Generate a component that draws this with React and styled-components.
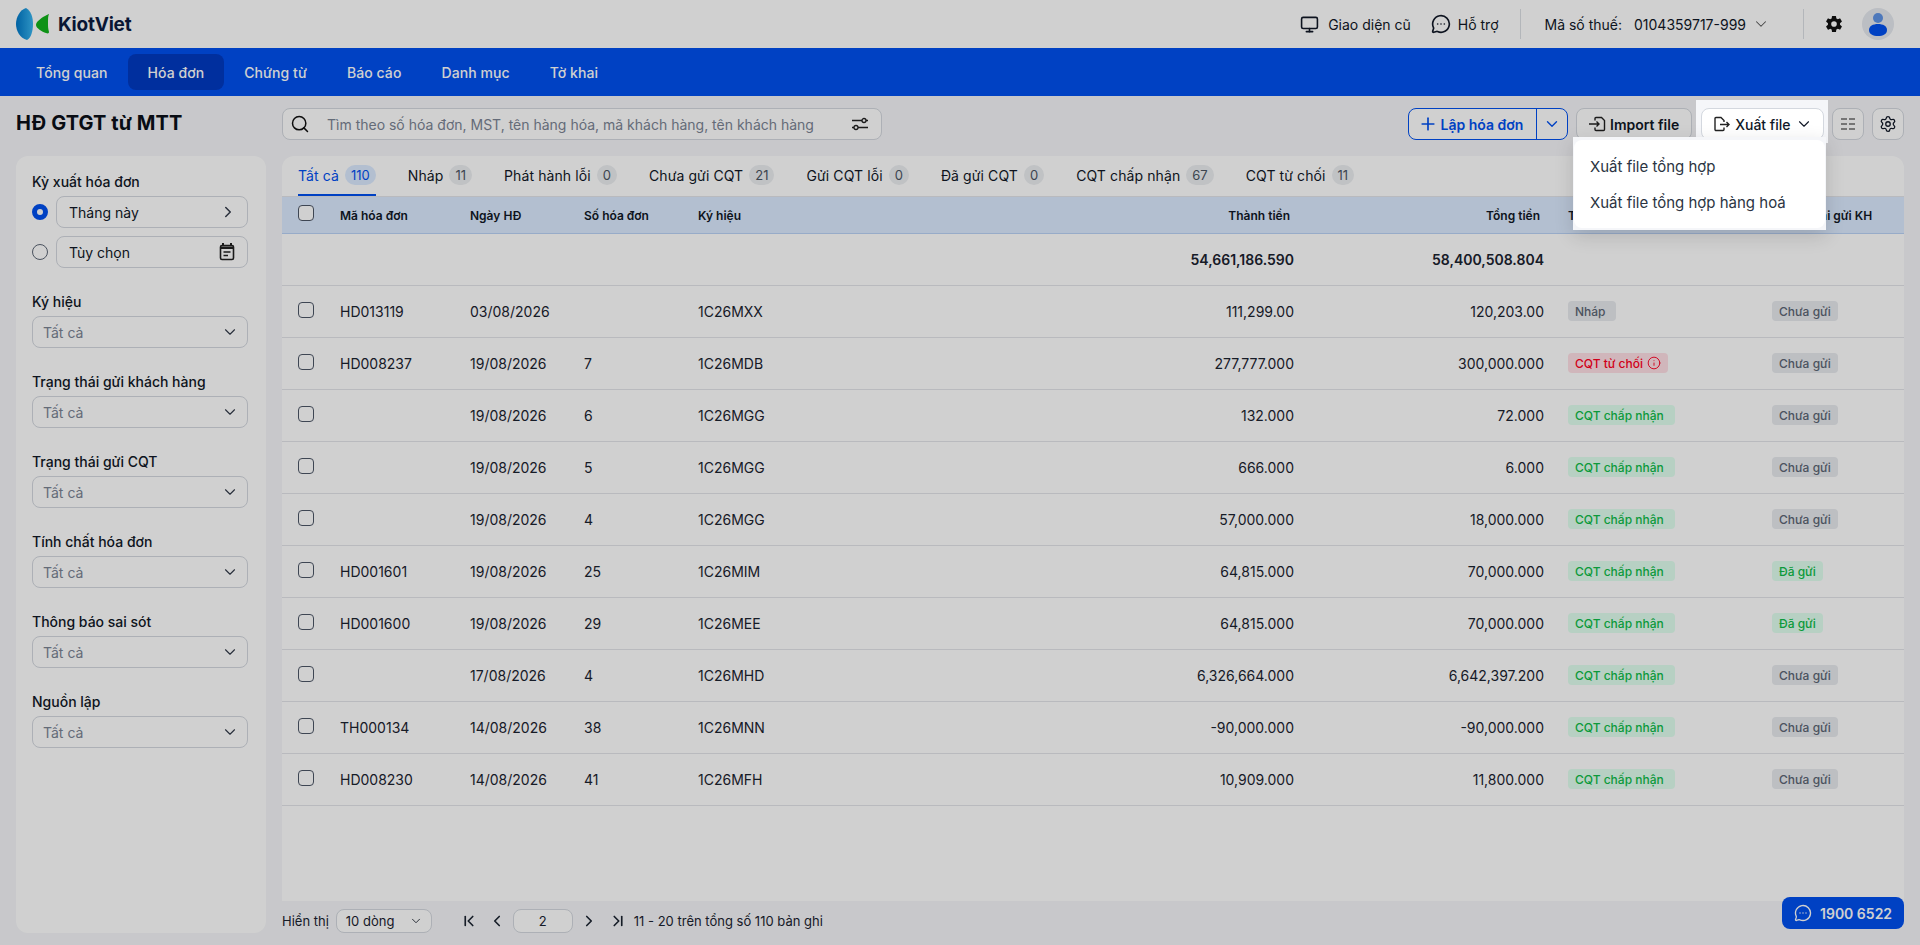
import React from "react";
import styled, { createGlobalStyle } from "styled-components";
import {
  ChevronDown,
  ChevronFirst,
  ChevronLast,
  ChevronLeft,
  ChevronRight,
  Info,
  MessageCircleMore,
  Monitor,
  Plus,
  Search,
  Settings,
} from "lucide-react";
import { IoSettingsSharp } from "react-icons/io5";

const navItems = ["Tổng quan", "Hóa đơn", "Chứng từ", "Báo cáo", "Danh mục", "Tờ khai"];

const tabs = [
  { text: "Tất cả", count: 110 },
  { text: "Nháp", count: 11 },
  { text: "Phát hành lỗi", count: 0 },
  { text: "Chưa gửi CQT", count: 21 },
  { text: "Gửi CQT lỗi", count: 0 },
  { text: "Đã gửi CQT", count: 0 },
  { text: "CQT chấp nhận", count: 67 },
  { text: "CQT từ chối", count: 11 },
];

const filters = ["Ký hiệu", "Trạng thái gửi khách hàng", "Trạng thái gửi CQT", "Tính chất hóa đơn", "Thông báo sai sót", "Nguồn lập"];

const rows = [
  ["HD013119", "03/08/2026", "", "1C26MXX", "111,299.00", "120,203.00", "draft", false],
  ["HD008237", "19/08/2026", "7", "1C26MDB", "277,777.000", "300,000.000", "rejected", false],
  ["", "19/08/2026", "6", "1C26MGG", "132.000", "72.000", "accepted", false],
  ["", "19/08/2026", "5", "1C26MGG", "666.000", "6.000", "accepted", false],
  ["", "19/08/2026", "4", "1C26MGG", "57,000.000", "18,000.000", "accepted", false],
  ["HD001601", "19/08/2026", "25", "1C26MIM", "64,815.000", "70,000.000", "accepted", true],
  ["HD001600", "19/08/2026", "29", "1C26MEE", "64,815.000", "70,000.000", "accepted", true],
  ["", "17/08/2026", "4", "1C26MHD", "6,326,664.000", "6,642,397.200", "accepted", false],
  ["TH000134", "14/08/2026", "38", "1C26MNN", "-90,000.000", "-90,000.000", "accepted", false],
  ["HD008230", "14/08/2026", "41", "1C26MFH", "10,909.000", "11,800.000", "accepted", false],
];

const GlobalStyle = createGlobalStyle`
  html, body {
    margin: 0;
    height: 100%;
    overflow: hidden;
  }
  body {
    background: #f5f6f9;
    color: #111827;
    font-family: "Inter", "Liberation Sans", sans-serif;
    font-size: 14px;
  }
  * {
    box-sizing: border-box;
  }
`;

const Page = styled.div`
  display: flex;
  flex-direction: column;
  height: 100vh;
`;

// dim layer that sits above the page while the export menu is open
const Overlay = styled.div`
  position: fixed;
  inset: 0;
  z-index: 10;
  background: rgba(0, 0, 0, 0.184);
`;

const TopBar = styled.header`
  display: flex;
  align-items: center;
  justify-content: space-between;
  height: 48px;
  padding: 0 26px 0 16px;
  background: #fff;
`;

const Logo = styled.div`
  display: flex;
  align-items: center;
  gap: 8px;
  font-size: 19px;
  font-weight: 700;
  letter-spacing: -0.2px;
  color: #0c1c42;
`;

const TopActions = styled.div`
  display: flex;
  align-items: center;
  height: 100%;
`;

const TopLink = styled.div`
  display: flex;
  align-items: center;
  gap: ${(props) => props.$inner || 9}px;
  margin-right: ${(props) => props.$gap || 0}px;
`;

const Divider = styled.span`
  width: 1px;
  height: 30px;
  margin: 0 ${(props) => props.$right}px 0 ${(props) => props.$left}px;
  background: #dcdfe4;
`;

const TaxLabel = styled.span`
  margin-right: 12px;
`;

const Gear = styled(IoSettingsSharp)`
  margin-right: 19px;
  color: #111;
`;

const Avatar = styled.div`
  display: flex;
  align-items: center;
  justify-content: center;
  width: 32px;
  height: 32px;
  border-radius: 50%;
  background: #e6e9ef;
`;

const Nav = styled.nav`
  display: flex;
  align-items: center;
  height: 48px;
  padding: 0 16px;
  background: #0050f0;
`;

const NavItem = styled.div`
  display: flex;
  align-items: center;
  height: 36px;
  padding: 0 20px;
  border-radius: 8px;
  color: #fff;
  font-weight: 500;
  letter-spacing: 0.08px;
  background: ${(props) => (props.$active ? "#003ac2" : "transparent")};
`;

const Body = styled.div`
  flex: 1;
  display: flex;
  gap: 16px;
  min-height: 0;
  padding: 12px 16px;
`;

const LeftColumn = styled.aside`
  display: flex;
  flex-direction: column;
  gap: 16px;
  width: 250px;
  flex-shrink: 0;
`;

const Title = styled.h1`
  display: flex;
  align-items: center;
  height: 32px;
  margin: 0;
  padding-bottom: 2px;
  font-size: 20px;
  font-weight: 700;
  letter-spacing: 0.1px;
  color: #0b0f18;
`;

const SidePanel = styled.div`
  flex: 1;
  display: flex;
  flex-direction: column;
  gap: 24px;
  padding: 16px 18px 16px 16px;
  border-radius: 12px;
  background: #fff;
`;

const FilterGroup = styled.div`
  display: flex;
  flex-direction: column;
  gap: 4px;
`;

const FilterLabel = styled.label`
  line-height: 20px;
  font-weight: 500;
`;

const RadioRow = styled.div`
  display: flex;
  align-items: center;
  gap: 8px;
  & + & {
    margin-top: 4px;
  }
`;

const Radio = styled.span`
  width: 16px;
  height: 16px;
  flex-shrink: 0;
  border-radius: 50%;
  background: #fff;
  border: ${(props) => (props.$checked ? "5px solid #0050f0" : "1px solid #5c6675")};
`;

const Field = styled.div`
  display: flex;
  align-items: center;
  justify-content: space-between;
  flex-grow: ${(props) => (props.$select ? 0 : 1)};
  height: 32px;
  padding: 0 ${(props) => (props.$select ? "8px 0 10px" : "10px 0 12px")};
  border: 1px solid #d4d8df;
  border-radius: 8px;
  background: #fff;
  color: ${(props) => (props.$select ? "#7b8494" : "#111827")};
  svg {
    color: #333b4a;
  }
`;

const MainColumn = styled.main`
  flex: 1;
  display: flex;
  flex-direction: column;
  min-width: 0;
`;

const Toolbar = styled.div`
  display: flex;
  align-items: center;
  justify-content: space-between;
  height: 32px;
  margin-bottom: 16px;
`;

const SearchBox = styled.div`
  display: flex;
  align-items: center;
  width: 600px;
  height: 32px;
  padding: 0 12px 0 7px;
  border: 1px solid #d4d8df;
  border-radius: 8px;
  background: #fff;
  color: #111;
`;

const Placeholder = styled.span`
  flex: 1;
  margin-left: 17px;
  color: #7b8494;
`;

const Actions = styled.div`
  display: flex;
  align-items: center;
  gap: 8px;
`;

const SplitButton = styled.div`
  display: flex;
  width: 160px;
  height: 32px;
  border: 1px solid #0050f0;
  border-radius: 8px;
  color: #0050f0;
  font-weight: 600;
  background: #fff;
`;

const SplitMain = styled.div`
  display: flex;
  align-items: center;
  gap: 3px;
  width: 128px;
  padding-left: 9px;
  border-right: 1px solid #0050f0;
`;

const SplitArrow = styled.div`
  flex: 1;
  display: flex;
  align-items: center;
  justify-content: center;
`;

const Button = styled.div`
  display: flex;
  align-items: center;
  justify-content: center;
  gap: 4px;
  height: 32px;
  padding: 0 ${(props) => props.$pad ?? 12}px;
  width: ${(props) => (props.$icon ? "32px" : "auto")};
  border: 1px solid #d4d8df;
  border-radius: 8px;
  background: #fff;
  font-weight: ${(props) => (props.$medium ? 500 : 600)};
  color: #111827;
`;

const ExportWrap = styled.div`
  position: relative;
  z-index: 20;
  margin: -8px -4px -3px -4px;
  padding: 8px 4px 3px 5px;
  background: #f5f6f9;
`;

const ExportMenu = styled.div`
  position: absolute;
  top: 37px;
  right: 2px;
  width: 253px;
  padding: 3px 1px 2px;
  background: #f5f6f9;
  box-shadow: 0 6px 18px rgba(0, 0, 0, 0.14);
`;

const ExportList = styled.ul`
  display: flex;
  flex-direction: column;
  margin: 0;
  padding: 8px 0;
  list-style: none;
  border-radius: 8px;
  background: #fff;
`;

const ExportItem = styled.li`
  display: flex;
  align-items: center;
  height: 36px;
  padding: 0 16px;
  font-size: 15px;
  color: #2b3442;
`;

const TablePanel = styled.section`
  flex: 1;
  display: flex;
  flex-direction: column;
  border-radius: 12px 12px 0 0;
  background: #fff;
  overflow: hidden;
`;

const TabRow = styled.div`
  display: flex;
  gap: 32px;
  height: 41px;
  padding: 0 16px;
  border-bottom: 1px solid #e3e5e9;
  flex-shrink: 0;
`;

const Tab = styled.div`
  display: flex;
  align-items: center;
  gap: 6px;
  height: 40px;
  letter-spacing: 0.1px;
  border-bottom: 2px solid ${(props) => (props.$active ? "#0050f0" : "transparent")};
  color: ${(props) => (props.$active ? "#0050f0" : "#111827")};
`;

const TabCount = styled.span`
  display: flex;
  align-items: center;
  justify-content: center;
  min-width: 20px;
  height: 20px;
  padding: 0 6px;
  border-radius: 10px;
  font-size: 13px;
  letter-spacing: 0;
  background: ${(props) => (props.$active ? "#dcebff" : "#eceef1")};
  color: ${(props) => (props.$active ? "#0050f0" : "#4b5563")};
`;

const Table = styled.table`
  width: 100%;
  table-layout: fixed;
  border-collapse: collapse;
`;

const HeadRow = styled.tr`
  height: 36px;
  background: #dcebff;
  border-bottom: 1px solid #b9d2f5;
`;

const HeadCell = styled.th`
  padding: 2px ${(props) => (props.$right ? "4px" : "0")} 0 0;
  font-size: 12px;
  font-weight: 600;
  text-align: ${(props) => (props.$right ? "right" : "left")};
  white-space: nowrap;
  color: #111827;
`;

const Row = styled.tr`
  height: 52px;
  border-bottom: 1px solid #e3e5e9;
`;

const Cell = styled.td`
  padding: 0;
  white-space: nowrap;
  text-align: ${(props) => (props.$right ? "right" : "left")};
  font-weight: ${(props) => (props.$bold ? 600 : 400)};
  color: #1b2330;
`;

const CheckCell = styled.td`
  padding: 0 0 2px 16px;
`;

const HeadCheckCell = styled.th`
  padding: 0 0 4px 16px;
  text-align: left;
`;

const Checkbox = styled.span`
  display: block;
  width: 16px;
  height: 16px;
  border: 1px solid #4d5666;
  border-radius: 4px;
  background: #fff;
`;

const statusColors = {
  draft: ["#e8eaee", "#5c6675"],
  rejected: ["#ffe0e6", "#ff0022"],
  accepted: ["#e1fff0", "#0fbd49"],
};

const Badge = styled.span`
  display: inline-flex;
  align-items: center;
  gap: 4px;
  height: 20px;
  padding: ${(props) => props.$padding || "0 7px"};
  border-radius: 4px;
  font-size: 12px;
  font-weight: 500;
  background: ${(props) => statusColors[props.$kind][0]};
  color: ${(props) => statusColors[props.$kind][1]};
`;

const Pager = styled.footer`
  display: flex;
  align-items: center;
  height: 24px;
  margin-top: 8px;
  font-size: 13px;
  color: #1b2330;
`;

const PageSize = styled.div`
  display: flex;
  align-items: center;
  justify-content: space-between;
  width: 96px;
  height: 24px;
  margin: 0 28px 0 7px;
  padding: 0 8px 0 9px;
  border: 1px solid #d4d8df;
  border-radius: 8px;
  background: #fff;
`;

const PageInput = styled.div`
  display: flex;
  align-items: center;
  justify-content: center;
  width: 60px;
  height: 24px;
  margin: 0 7px;
  border: 1px solid #d4d8df;
  border-radius: 8px;
  background: #fff;
`;

const PagerIcon = styled.span`
  display: flex;
  align-items: center;
  justify-content: center;
  width: 18px;
  margin-right: ${(props) => props.$gap || 0}px;
`;

const PagerText = styled.span`
  margin-left: 7px;
`;

const PhoneButton = styled.div`
  position: fixed;
  right: 16px;
  bottom: 16px;
  display: flex;
  align-items: center;
  gap: 8px;
  width: 122px;
  height: 32px;
  padding-left: 12px;
  border-radius: 8px;
  background: #0050f0;
  color: #fff;
  font-weight: 600;
`;

const CalendarSvg = styled.svg`
  margin-right: 2px;
`;

const LogoMark = () => (
  <svg width="34" height="32" viewBox="0 0 34 32">
    <defs>
      <linearGradient id="kvBlue" x1="0" x2="1" y1="0" y2="0">
        <stop offset="0" stopColor="#0078c8" />
        <stop offset="1" stopColor="#39b6f0" />
      </linearGradient>
    </defs>
    <path d="M10 0C4 2 0 9 0 16c0 7 4 14 11 16 4-2 6-9 6-16S15 3 10 0z" fill="url(#kvBlue)" />
    <path d="M33 6c-1 0-2 1-4 2-4 2-9 6-9 9 0 3 6 7 10 8 2 1 3 0 3-1-1-4-1-5-1-9s0-7 1-9z" fill="#12b31c" />
  </svg>
);

const AvatarIcon = () => (
  <svg width="18" height="24" viewBox="0 0 18 24">
    <circle cx="9" cy="6" r="5" fill="#5f93e6" />
    <path d="M0 18c0-4 4-6 9-6s9 2 9 6-4 6-9 6-9-2-9-6z" fill="#0050f0" />
  </svg>
);

const ColumnsIcon = () => (
  <svg width="14" height="12" viewBox="0 0 14 12" fill="none" stroke="#222" strokeWidth="1.2">
    <path d="M0 1h6M8 1h6M0 6h6M8 6h6M0 11h6M8 11h6" />
  </svg>
);

const CalendarIcon = () => (
  <CalendarSvg width="16" height="18" viewBox="0 0 16 18" fill="none">
    <path d="M4 0v3M12 0v3" stroke="#222" strokeWidth="2" />
    <rect x="1.5" y="2.5" width="13" height="14" rx="1.5" stroke="#222" strokeWidth="1.6" />
    <path d="M1.5 3.5h13v2.5h-13z" fill="#222" />
    <path d="M4.5 9h7M4.5 12.5h4.5" stroke="#222" strokeWidth="1.4" />
  </CalendarSvg>
);

const FilterIcon = () => (
  <svg width="18" height="14" viewBox="0 0 18 14" fill="none" stroke="#222" strokeWidth="1.3">
    <path d="M1 3.5h10M15 3.5h2M1 10.5h2M7 10.5h10" />
    <circle cx="13" cy="3.5" r="2" />
    <circle cx="5" cy="10.5" r="2" />
  </svg>
);

const ImportIcon = () => (
  <svg width="18" height="16" viewBox="0 0 18 16" fill="none" stroke="#222" strokeWidth="1.4">
    <path d="M7 4.5V2.5a1 1 0 0 1 1-1h5.5l3 3v9a1 1 0 0 1-1 1H8a1 1 0 0 1-1-1V11.5" />
    <path d="M1 8h10M8.5 5.5 11 8l-2.5 2.5" />
  </svg>
);

const ExportIcon = () => (
  <svg width="19" height="16" viewBox="0 0 19 16" fill="none" stroke="#222" strokeWidth="1.4">
    <path d="M12 11.5v2a1 1 0 0 1-1 1H4a1 1 0 0 1-1-1v-11a1 1 0 0 1 1-1h5l3 3v1.5" />
    <path d="M8 8.5h9M14.5 6l2.5 2.5-2.5 2.5" />
  </svg>
);

export default function App() {
  return (
    <Page>
      <GlobalStyle />
      <TopBar>
        <Logo>
          <LogoMark />
          KiotViet
        </Logo>
        <TopActions>
          <TopLink $gap={20}>
            <Monitor size={19} strokeWidth={2} />
            Giao diện cũ
          </TopLink>
          <TopLink $inner={7}>
            <MessageCircleMore size={20} strokeWidth={2} />
            Hỗ trợ
          </TopLink>
          <Divider $left={21} $right={24} />
          <TaxLabel>Mã số thuế:</TaxLabel>
          <TopLink $inner={6}>
            0104359717-999
            <ChevronDown size={18} strokeWidth={1.4} color="#555" />
          </TopLink>
          <Divider $left={33} $right={21} />
          <Gear size={18} />
          <Avatar>
            <AvatarIcon />
          </Avatar>
        </TopActions>
      </TopBar>

      <Nav>
        {navItems.map((item) => (
          <NavItem key={item} $active={item === "Hóa đơn"}>
            {item}
          </NavItem>
        ))}
      </Nav>

      <Body>
        <LeftColumn>
          <Title>HĐ GTGT từ MTT</Title>
          <SidePanel>
            <FilterGroup>
              <FilterLabel>Kỳ xuất hóa đơn</FilterLabel>
              <RadioRow>
                <Radio $checked />
                <Field>
                  Tháng này
                  <ChevronRight size={18} />
                </Field>
              </RadioRow>
              <RadioRow>
                <Radio />
                <Field>
                  Tùy chọn
                  <CalendarIcon />
                </Field>
              </RadioRow>
            </FilterGroup>
            {filters.map((label) => (
              <FilterGroup key={label}>
                <FilterLabel>{label}</FilterLabel>
                <Field $select>
                  Tất cả
                  <ChevronDown size={18} strokeWidth={1.5} />
                </Field>
              </FilterGroup>
            ))}
          </SidePanel>
        </LeftColumn>

        <MainColumn>
          <Toolbar>
            <SearchBox>
              <Search size={20} strokeWidth={1.8} />
              <Placeholder>Tìm theo số hóa đơn, MST, tên hàng hóa, mã khách hàng, tên khách hàng</Placeholder>
              <FilterIcon />
            </SearchBox>
            <Actions>
              <SplitButton>
                <SplitMain>
                  <Plus size={20} strokeWidth={2} />
                  Lập hóa đơn
                </SplitMain>
                <SplitArrow>
                  <ChevronDown size={18} strokeWidth={1.8} />
                </SplitArrow>
              </SplitButton>
              <Button $pad={11.5}>
                <ImportIcon />
                Import file
              </Button>
              <ExportWrap>
                <Button $medium $pad={10.5}>
                  <ExportIcon />
                  Xuất file
                  <ChevronDown size={18} strokeWidth={1.5} />
                </Button>
                <ExportMenu>
                  <ExportList>
                    <ExportItem>Xuất file tổng hợp</ExportItem>
                    <ExportItem>Xuất file tổng hợp hàng hoá</ExportItem>
                  </ExportList>
                </ExportMenu>
              </ExportWrap>
              <Button $icon $pad={0}>
                <ColumnsIcon />
              </Button>
              <Button $icon $pad={0}>
                <Settings size={18} strokeWidth={1.7} />
              </Button>
            </Actions>
          </Toolbar>

          <TablePanel>
            <TabRow>
              {tabs.map((tab, i) => (
                <Tab key={tab.text} $active={i === 0}>
                  {tab.text}
                  <TabCount $active={i === 0}>{tab.count}</TabCount>
                </Tab>
              ))}
            </TabRow>
            <Table>
              <colgroup>
                <col width="58" />
                <col width="130" />
                <col width="114" />
                <col width="114" />
                <col width="302" />
                <col width="294" />
                <col width="250" />
                <col width="24" />
                <col width="204" />
                <col width="132" />
              </colgroup>
              <thead>
                <HeadRow>
                  <HeadCheckCell>
                    <Checkbox />
                  </HeadCheckCell>
                  <HeadCell>Mã hóa đơn</HeadCell>
                  <HeadCell>Ngày HĐ</HeadCell>
                  <HeadCell>Số hóa đơn</HeadCell>
                  <HeadCell>Ký hiệu</HeadCell>
                  <HeadCell $right>Thành tiền</HeadCell>
                  <HeadCell $right>Tổng tiền</HeadCell>
                  <HeadCell />
                  <HeadCell>Trạng thái CQT</HeadCell>
                  <HeadCell>Trạng thái gửi KH</HeadCell>
                </HeadRow>
              </thead>
              <tbody>
                <Row>
                  <Cell colSpan={5} />
                  <Cell $right $bold>54,661,186.590</Cell>
                  <Cell $right $bold>58,400,508.804</Cell>
                  <Cell colSpan={3} />
                </Row>
                {rows.map((row, i) => (
                  <Row key={i}>
                    <CheckCell>
                      <Checkbox />
                    </CheckCell>
                    <Cell>{row[0]}</Cell>
                    <Cell>{row[1]}</Cell>
                    <Cell>{row[2]}</Cell>
                    <Cell>{row[3]}</Cell>
                    <Cell $right>{row[4]}</Cell>
                    <Cell $right>{row[5]}</Cell>
                    <Cell />
                    <Cell>
                      {row[6] === "draft" && <Badge $kind="draft" $padding="0 10px 0 7px">Nháp</Badge>}
                      {row[6] === "rejected" && (
                        <Badge $kind="rejected">
                          CQT từ chối
                          <Info size={14} strokeWidth={1.6} />
                        </Badge>
                      )}
                      {row[6] === "accepted" && <Badge $kind="accepted" $padding="0 11px 0 7px">CQT chấp nhận</Badge>}
                    </Cell>
                    <Cell>
                      <Badge $kind={row[7] ? "accepted" : "draft"}>{row[7] ? "Đã gửi" : "Chưa gửi"}</Badge>
                    </Cell>
                  </Row>
                ))}
              </tbody>
            </Table>
          </TablePanel>

          <Pager>
            Hiển thị
            <PageSize>
              10 dòng
              <ChevronDown size={14} strokeWidth={1.5} />
            </PageSize>
            <PagerIcon $gap={10}>
              <ChevronFirst size={18} strokeWidth={2.2} />
            </PagerIcon>
            <PagerIcon>
              <ChevronLeft size={18} strokeWidth={2.2} />
            </PagerIcon>
            <PageInput>2</PageInput>
            <PagerIcon $gap={11}>
              <ChevronRight size={18} strokeWidth={2.2} />
            </PagerIcon>
            <PagerIcon>
              <ChevronLast size={18} strokeWidth={2.2} />
            </PagerIcon>
            <PagerText>11 - 20 trên tổng số 110 bản ghi</PagerText>
          </Pager>
        </MainColumn>
      </Body>

      <PhoneButton>
        <MessageCircleMore size={18} strokeWidth={1.8} />
        1900 6522
      </PhoneButton>
      <Overlay />
    </Page>
  );
}
